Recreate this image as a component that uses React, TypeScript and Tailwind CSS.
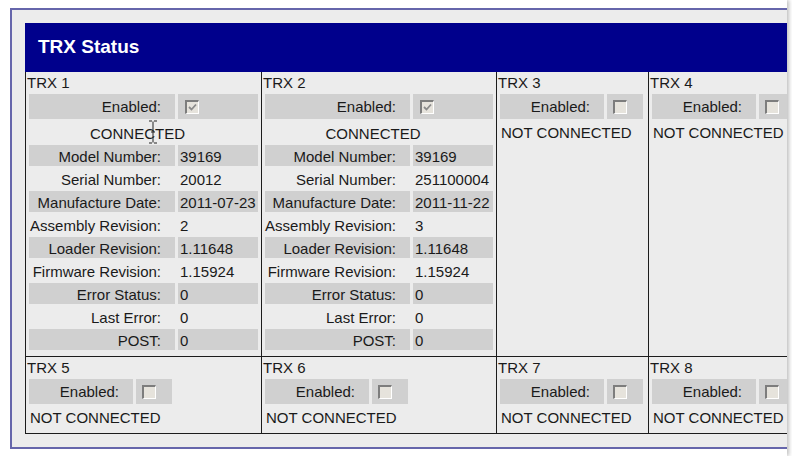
import { useState } from 'react';

type Trx = {
    id: number;
    enabled: boolean;
    info?: [string, string][];
};

const labels = [
    'Model Number:',
    'Serial Number:',
    'Manufacture Date:',
    'Assembly Revision:',
    'Loader Revision:',
    'Firmware Revision:',
    'Error Status:',
    'Last Error:',
    'POST:',
];

const top: Trx[] = [
    { id: 1, enabled: true, info: labels.map((l, i) => [l, ['39169', '20012', '2011-07-23', '2', '1.11648', '1.15924', '0', '0', '0'][i]]) },
    { id: 2, enabled: true, info: labels.map((l, i) => [l, ['39169', '251100004', '2011-11-22', '3', '1.11648', '1.15924', '0', '0', '0'][i]]) },
    { id: 3, enabled: false },
    { id: 4, enabled: false },
];

const bottom: Trx[] = [
    { id: 5, enabled: false },
    { id: 6, enabled: false },
    { id: 7, enabled: false },
    { id: 8, enabled: false },
];

const colWidths = ['w-[236px]', 'w-[235px]', 'w-[152px]', 'w-[160px]'];

function Checkbox({ checked }: { checked: boolean }) {
    return (
        <div className="w-[14px] h-[14px] border-t-2 border-l-2 border-t-[#7d7d7d] border-l-[#7d7d7d] border-b border-r border-b-white border-r-white bg-[#e6e3dc] flex items-center justify-center">
            {checked && (
                <svg width="9" height="9" viewBox="0 0 9 9">
                    <path d="M1 4 L3.5 6.5 L8 1.5" stroke="#8a8a8a" strokeWidth="1.8" fill="none" />
                </svg>
            )}
        </div>
    );
}

function TrxCell({ trx, width }: { trx: Trx; width: string }) {
    const connected = !!trx.info;
    return (
        <div className={`${width} shrink-0 border-l border-[#1c1c1c] flex flex-col gap-[2px] px-[3px]`}>
            <div className="h-[20px] leading-[22px] -ml-[2px]">TRX {trx.id}</div>

            {connected ? (
                <>
                    <div className="flex gap-[3px] h-[25px]">
                        <div className="flex-1 bg-[#d0d0d0] text-right pr-[14px] leading-[26px]">Enabled:</div>
                        <div className="w-[80px] bg-[#d0d0d0] flex items-center pl-[7px]">
                            <Checkbox checked={trx.enabled} />
                        </div>
                    </div>
                    <div className="h-[22px] leading-[25px] text-center pr-[12px]">CONNECTED</div>
                    {trx.info!.map(([label, value], i) => (
                        <div key={label} className="flex gap-[3px] h-[21px] leading-[23px]">
                            <div className={`flex-1 text-right pr-[14px] whitespace-nowrap ${i % 2 === 0 ? 'bg-[#d0d0d0]' : ''}`}>{label}</div>
                            <div className={`w-[80px] pl-[2px] ${i % 2 === 0 ? 'bg-[#d0d0d0]' : ''}`}>{value}</div>
                        </div>
                    ))}
                </>
            ) : (
                <>
                    <div className="flex gap-[3px] h-[25px]">
                        <div className="w-[104px] bg-[#d0d0d0] text-right pr-[14px] leading-[26px]">Enabled:</div>
                        <div className="w-[36px] bg-[#d0d0d0] flex items-center pl-[6px]">
                            <Checkbox checked={trx.enabled} />
                        </div>
                    </div>
                    <div className="h-[22px] leading-[24px] pl-px whitespace-nowrap">NOT CONNECTED</div>
                </>
            )}
        </div>
    );
}

export default function App() {
    const [rows] = useState([top, bottom]);

    return (
        <div className="w-[792px] h-[456px] bg-white overflow-hidden relative font-['Liberation_Sans',Arial,sans-serif] text-[15px] text-[#1a1a1a]">
            <div className="w-[787px] h-full overflow-hidden shadow-[2px_0_4px_rgba(0,0,0,0.25)] bg-white">
                <div className="pt-2 pl-[10px]">
                    <div className="w-[820px] border-2 border-[#6666ab] bg-[#ececec] pt-[13px] pl-[13px] pb-[13px]">
                        {/* header bar */}
                        <div className="h-[49px] bg-[#00008c] flex items-center pl-[13px] pb-px">
                            <span className="text-white font-bold text-[19px]">TRX Status</span>
                        </div>

                        {/* status table */}
                        <div className="flex flex-col">
                            <div className="flex h-[284px]">
                                {rows[0].map((t, i) => (
                                    <TrxCell key={t.id} trx={t} width={colWidths[i]} />
                                ))}
                            </div>
                            <div className="flex h-[78px] border-t border-b border-[#1c1c1c]">
                                {rows[1].map((t, i) => (
                                    <TrxCell key={t.id} trx={t} width={colWidths[i]} />
                                ))}
                            </div>
                        </div>
                    </div>
                </div>
            </div>

            {/* mouse text cursor over CONNECTED */}
            <svg className="absolute left-[148px] top-[120px]" width="10" height="24" viewBox="0 0 10 24">
                <path d="M1 1 H4 M6 1 H9 M5 1.5 V22.5 M1 23 H4 M6 23 H9 M3 12 H7" stroke="#222" strokeWidth="1" fill="none" />
            </svg>
        </div>
    );
}
